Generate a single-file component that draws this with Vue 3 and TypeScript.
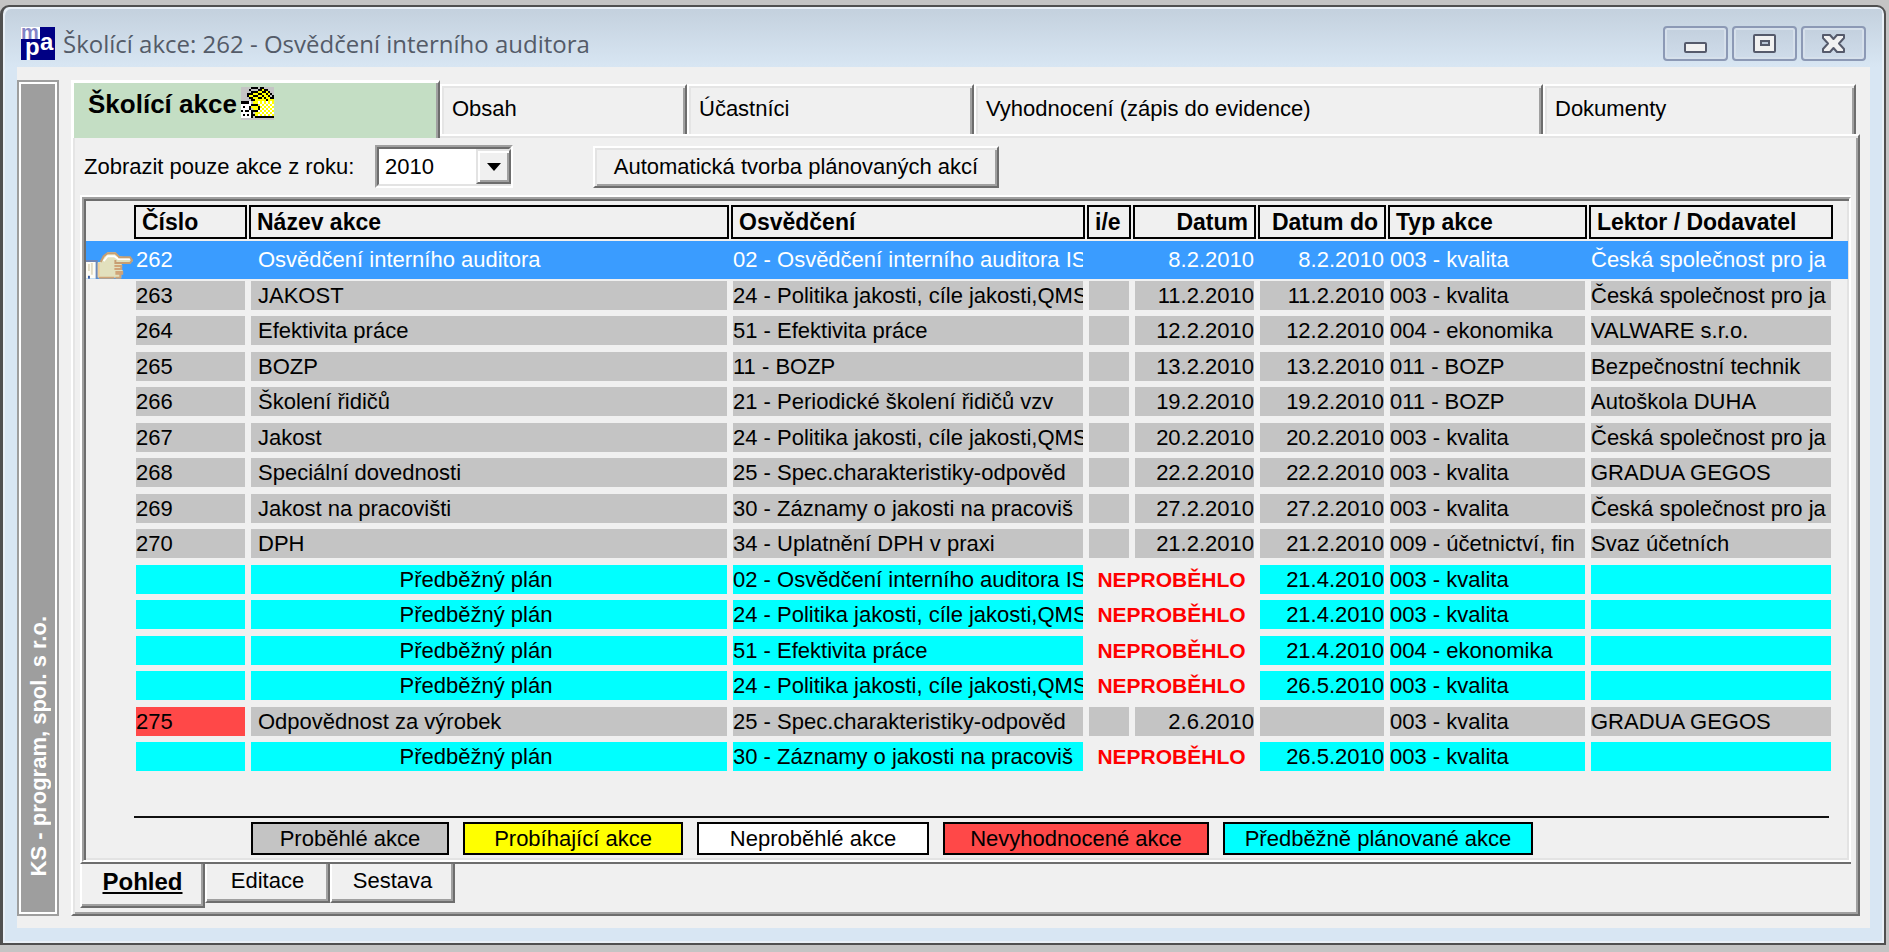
<script setup lang="ts">
import { ref } from 'vue'

type Status = 'done' | 'late' | 'plan'

interface Training {
  id: string
  name: string
  cert: string
  from: string
  to: string
  kind: string
  lector: string
  status: Status
}

const tabs = [
  { label: 'Školící akce', size: 369 },
  { label: 'Obsah', size: 247 },
  { label: 'Účastníci', size: 287 },
  { label: 'Vyhodnocení (zápis do evidence)', size: 569 },
  { label: 'Dokumenty', size: 313 },
]
const activeTab = ref(0)

const views = ['Pohled', 'Editace', 'Sestava']
const activeView = ref(0)

const years = ['2010', '2009', '2008']
const year = ref('2010')

const row = (
  id: string, name: string, cert: string, from: string, to: string,
  kind: string, lector: string, status: Status = 'done',
): Training => ({ id, name, cert, from, to, kind, lector, status })

const plan = (cert: string, to: string, kind: string): Training =>
  row('', 'Předběžný plán', cert, '', to, kind, '', 'plan')

const csj = 'Česká společnost pro ja'
const audit = '02 - Osvědčení interního auditora IS'
const policy = '24 - Politika jakosti, cíle jakosti,QMS'
const spec = '25 - Spec.charakteristiky-odpověd'
const records = '30 - Záznamy o jakosti na pracoviš'

const rows: Training[] = [
  row('262', 'Osvědčení interního auditora', audit, '8.2.2010', '8.2.2010', '003 - kvalita', csj),
  row('263', 'JAKOST', policy, '11.2.2010', '11.2.2010', '003 - kvalita', csj),
  row('264', 'Efektivita práce', '51 - Efektivita práce', '12.2.2010', '12.2.2010', '004 - ekonomika', 'VALWARE s.r.o.'),
  row('265', 'BOZP', '11 - BOZP', '13.2.2010', '13.2.2010', '011 - BOZP', 'Bezpečnostní technik'),
  row('266', 'Školení řidičů', '21 - Periodické školení řidičů vzv', '19.2.2010', '19.2.2010', '011 - BOZP', 'Autoškola DUHA'),
  row('267', 'Jakost', policy, '20.2.2010', '20.2.2010', '003 - kvalita', csj),
  row('268', 'Speciální dovednosti', spec, '22.2.2010', '22.2.2010', '003 - kvalita', 'GRADUA GEGOS'),
  row('269', 'Jakost na pracovišti', records, '27.2.2010', '27.2.2010', '003 - kvalita', csj),
  row('270', 'DPH', '34 - Uplatnění DPH v praxi', '21.2.2010', '21.2.2010', '009 - účetnictví, fin', 'Svaz účetních'),
  plan(audit, '21.4.2010', '003 - kvalita'),
  plan(policy, '21.4.2010', '003 - kvalita'),
  plan('51 - Efektivita práce', '21.4.2010', '004 - ekonomika'),
  plan(policy, '26.5.2010', '003 - kvalita'),
  row('275', 'Odpovědnost za výrobek', spec, '2.6.2010', '', '003 - kvalita', 'GRADUA GEGOS', 'late'),
  plan(records, '26.5.2010', '003 - kvalita'),
]
const selected = ref(0)

const legend = [
  { label: 'Proběhlé akce', color: '#c4c4c4', width: 198 },
  { label: 'Probíhající akce', color: '#ffff00', width: 220 },
  { label: 'Neproběhlé akce', color: '#ffffff', width: 232 },
  { label: 'Nevyhodnocené akce', color: '#ff4848', width: 266 },
  { label: 'Předběžně plánované akce', color: '#00ffff', width: 310 },
]
</script>

<template>
  <div class="desktop">
    <div class="window">
      <header class="titlebar">
        <svg class="logo" viewBox="0 0 34 33" aria-hidden="true">
          <rect width="34" height="33" fill="#000084" />
          <rect width="19" height="12" fill="#fff" />
          <text x="0" y="12" class="lg" font-size="20" fill="#8484c6">m</text>
          <text x="4" y="28" class="lg" font-size="24" fill="#fff">p</text>
          <text x="19" y="23" class="lg" font-size="24" fill="#fff">a</text>
        </svg>
        <h1>Školící akce: 262 - Osvědčení interního auditora</h1>
        <div class="controls">
          <button type="button" aria-label="Minimalizovat">
            <svg width="24" height="20" viewBox="0 0 24 20">
              <rect x="1" y="9" width="21" height="9" rx="1" fill="#f1f1f1" stroke="#555a6b" stroke-width="2" />
            </svg>
          </button>
          <button type="button" aria-label="Maximalizovat">
            <svg width="24" height="20" viewBox="0 0 24 20">
              <rect x="1" y="1" width="21" height="17" rx="1" fill="#f1f1f1" stroke="#555a6b" stroke-width="2" />
              <rect x="8" y="7" width="8" height="4" fill="#b9c6d6" stroke="#555a6b" stroke-width="2" />
            </svg>
          </button>
          <button type="button" aria-label="Zavřít">
            <svg width="24" height="20" viewBox="0 0 24 20">
              <path d="M1 1H8L11.500 5L15 1H22V4L17 9.500L22 15V18H15L11.500 14L8 18H1V15L6 9.500L1 4Z" fill="#f1f1f1" stroke="#555a6b" stroke-width="2" stroke-linejoin="round" />
            </svg>
          </button>
        </div>
      </header>

      <div class="client">
        <aside class="brand"><span>KS - program, spol. s r.o.</span></aside>

        <main class="main">
          <nav class="tabs">
            <button
              v-for="(t, i) in tabs"
              :key="t.label"
              type="button"
              class="tab"
              :class="{ active: i === activeTab }"
              :style="{ flex: `${t.size} 1 ${t.size}px` }"
              @click="activeTab = i"
            >
              <span>{{ t.label }}</span>
              <svg v-if="i === activeTab" class="clap" viewBox="0 0 16 16" shape-rendering="crispEdges" aria-hidden="true">
                <rect width="16" height="16" fill="#c4c4c4" />
                <path d="M0 7H5V15H0Z" fill="#fff" />
                <path d="M4 4H6V2H8V1H11V2H13V3H14V5H15V6H16V14H7V12H6V10H5V8H6V6H4Z" fill="#ffff00" />
                <path
                  d="M8 7h1v1H8zM10 7h1v1h-1zM12 7h1v1h-1zM14 7h1v1h-1zM9 8h1v1H9zM11 8h1v1h-1zM13 8h1v1h-1zM15 8h1v1h-1zM10 9h1v1h-1zM12 9h1v1h-1zM14 9h1v1h-1zM9 10h1v1H9zM11 10h1v1h-1zM13 10h1v1h-1zM15 10h1v1h-1zM8 11h1v1H8zM10 11h1v1h-1zM12 11h1v1h-1zM14 11h1v1h-1zM9 12h1v1H9zM11 12h1v1h-1zM13 12h1v1h-1zM15 12h1v1h-1zM8 13h1v1H8zM10 13h1v1h-1zM12 13h1v1h-1zM14 13h1v1h-1z"
                  fill="#fff"
                />
                <path
                  d="M5 0h3v1H5zM9 0h2v1H9zM4 1h1v1H4zM8 1h2v1H8zM11 1h2v1h-2zM5 2h3v1H5zM10 2h2v1h-2zM13 2h1v1h-1zM3 3h3v1H3zM8 3h2v1H8zM12 3h1v1h-1zM14 3h1v1h-1zM3 4h1v1H3zM6 4h2v1H6zM10 4h1v1h-1zM13 4h1v1h-1zM15 4h1v2h-1zM4 5h2v1H4zM8 5h2v1H8zM11 5h1v1h-1zM14 5h1v1h-1zM5 6h2v1H5zM12 6h1v1h-1zM0 7h4v1H0zM5 8h3v1H5zM4 9h1v2H4zM8 9h1v2H8zM5 11h3v1H5zM1 9h1v1H1zM2 11h2v1H2zM0 11h1v1H0zM1 13h1v1H1zM3 13h1v1H3zM5 12h1v3H5zM6 13h1v1H6zM7 14h9v1H7z"
                  fill="#000"
                />
              </svg>
            </button>
          </nav>

          <section class="panel">
            <div class="toolbar">
              <label for="year">Zobrazit pouze akce z roku:</label>
              <span class="combo">
                <select id="year" v-model="year">
                  <option v-for="y in years" :key="y">{{ y }}</option>
                </select>
                <span class="arrow" aria-hidden="true">
                  <svg width="14" height="8" viewBox="0 0 14 8"><path d="M0 0H14L7 8Z" /></svg>
                </span>
              </span>
              <button type="button" class="push">Automatická tvorba plánovaných akcí</button>
            </div>

            <div class="frame">
              <div class="sheet">
                <table>
                  <colgroup>
                    <col class="c-mark" /><col class="c-id" /><col class="c-name" /><col class="c-cert" />
                    <col class="c-ie" /><col class="c-from" /><col class="c-to" /><col class="c-kind" />
                    <col class="c-lector" /><col class="c-end" />
                  </colgroup>
                  <thead>
                    <tr>
                      <td></td>
                      <th scope="col"><div>Číslo</div></th>
                      <th scope="col"><div>Název akce</div></th>
                      <th scope="col"><div>Osvědčení</div></th>
                      <th scope="col"><div>i/e</div></th>
                      <th scope="col" class="right"><div>Datum</div></th>
                      <th scope="col" class="right"><div>Datum do</div></th>
                      <th scope="col"><div>Typ akce</div></th>
                      <th scope="col"><div>Lektor / Dodavatel</div></th>
                      <td></td>
                    </tr>
                  </thead>
                  <tbody>
                    <tr
                      v-for="(r, i) in rows"
                      :key="i"
                      :class="[r.status, { selected: i === selected }]"
                      @click="selected = i"
                    >
                      <td class="mark">
                        <svg v-if="i === selected" viewBox="0 0 48 28" aria-hidden="true">
                          <path d="M0 10H10V28H0Z" fill="#fffdf5" />
                          <path d="M6 12V24M3 13V20" stroke="#e3dcc4" stroke-width="2" fill="none" />
                          <path d="M0 10H11V28" stroke="#6f86b5" stroke-width="2" fill="none" />
                          <path d="M3 25V28" stroke="#3a5fa5" stroke-width="2" />
                          <path d="M12 11H15L18 5L22 1H30L34 5L46 7L48 10L45 12H36L37 15L36 18L38 20L36 23V27H12Z" fill="#e2e0bd" />
                          <path d="M15 11L18 5L22 2H30L34 6" stroke="#c79e72" stroke-width="2" fill="none" />
                          <path d="M18 10L22 5H29L33 8H45" stroke="#fff" stroke-width="2" fill="none" />
                          <path d="M33 6H45L47 9L45 12H30V9" stroke="#c79e72" stroke-width="2" fill="none" />
                          <path d="M29 15H36V18H29M30 21H37V23H30M30 27H35V24M13 27H29" stroke="#d0a478" stroke-width="2" fill="none" />
                          <path d="M13 12V26" stroke="#f0cf98" stroke-width="2" />
                        </svg>
                      </td>
                      <td class="id">{{ r.id }}</td>
                      <td class="name">{{ r.name }}</td>
                      <td>{{ r.cert }}</td>
                      <td v-if="r.status === 'plan'" class="missed" colspan="2">NEPROBĚHLO</td>
                      <template v-else>
                        <td></td>
                        <td class="right">{{ r.from }}</td>
                      </template>
                      <td class="right">{{ r.to }}</td>
                      <td>{{ r.kind }}</td>
                      <td>{{ r.lector }}</td>
                      <td class="end"></td>
                    </tr>
                  </tbody>
                </table>

                <ul class="legend">
                  <li v-for="l in legend" :key="l.label" :style="{ background: l.color, width: l.width + 'px' }">
                    {{ l.label }}
                  </li>
                </ul>
              </div>
            </div>

            <nav class="views">
              <button
                v-for="(v, i) in views"
                :key="v"
                type="button"
                :class="{ active: i === activeView }"
                @click="activeView = i"
              >{{ v }}</button>
            </nav>
          </section>
        </main>
      </div>
    </div>
  </div>
</template>

<style>
body {
  margin: 0;
  background: #c4c4c4;
}
</style>

<style scoped>
* {
  box-sizing: border-box;
}

.desktop {
  display: flex;
  min-height: 100vh;
  padding: 5px 3px 7px 0;
  background: #c4c4c4;
  color: #000;
  font: 22px/29px "Liberation Sans", Arial, sans-serif;
}

button,
select {
  font: inherit;
  color: inherit;
  border-radius: 0;
}

.window {
  flex: 1;
  min-width: 0;
  display: flex;
  flex-direction: column;
  padding: 0 14px 15px;
  border: 2px solid #505050;
  border-left-width: 3px;
  border-radius: 9px 9px 0 0;
  background: linear-gradient(#c3d0dd, #d8e6f3 60px);
  box-shadow: inset 2px 2px 0 #e9f0f7, inset -2px -2px 0 #e9f0f7;
}

.titlebar {
  display: flex;
  align-items: center;
  height: 60px;
  padding: 13px 4px 0;
}

.logo {
  width: 34px;
  height: 33px;
  margin-right: 8px;
  overflow: hidden;
}

.lg {
  font-family: "Liberation Sans", Arial, sans-serif;
  font-weight: bold;
}

h1 {
  flex: 1;
  margin: 0;
  color: #545b68;
  font: 400 24px/30px "Open Sans", "Noto Sans", sans-serif;
  white-space: nowrap;
}

.controls {
  display: flex;
  gap: 4px;
}

.controls button {
  display: flex;
  align-items: center;
  justify-content: center;
  width: 65px;
  height: 35px;
  padding: 0;
  border: 2px solid #8c99b5;
  border-radius: 4px;
  background: linear-gradient(#c3d0de, #cfdcea);
  box-shadow: inset 0 0 0 2px #d6e0eb;
}

.client {
  flex: 1;
  display: flex;
  gap: 12px;
  padding: 13px 10px 12px 0;
  background: #f0f0f0;
}

.brand {
  display: flex;
  align-items: flex-end;
  justify-content: center;
  width: 42px;
  padding-bottom: 38px;
  border: 2px solid #9e9e9e;
  background: #9e9e9e;
  box-shadow: inset 0 0 0 2px #fff;
  color: #fff;
  font-weight: bold;
}

.brand span {
  writing-mode: vertical-rl;
  transform: rotate(180deg);
  white-space: nowrap;
}

.main {
  flex: 1;
  min-width: 0;
  display: flex;
  flex-direction: column;
}

.tabs {
  display: flex;
  height: 54px;
  padding-right: 4px;
}

.tab {
  display: flex;
  align-items: center;
  min-width: 0;
  margin-top: 4px;
  padding: 0 10px 4px;
  border: solid;
  border-width: 2px 2px 0;
  border-color: #fff #6d6d6d #fff #fff;
  background: #f0f0f0;
  box-shadow: inset 2px 2px 0 #e5e5e5, inset -2px 0 0 #a0a0a0;
  white-space: nowrap;
}

.tab.active {
  z-index: 1;
  align-items: flex-start;
  margin-top: 0;
  margin-bottom: -4px;
  padding: 4px 14px;
  border-width: 3px 2px 0 3px;
  background: #c4dec4;
  box-shadow: inset -2px 0 0 #a0a0a0;
  font-size: 26px;
  font-weight: bold;
  line-height: 34px;
}

.clap {
  width: 33px;
  height: 33px;
  margin-left: 4px;
}

.panel {
  flex: 1;
  display: flex;
  flex-direction: column;
  padding: 9px 7px 6px;
  border: 2px solid;
  border-color: #fff #6d6d6d #6d6d6d #fff;
  box-shadow: inset 2px 2px 0 #e5e5e5, inset -2px -2px 0 #a0a0a0;
}

.toolbar {
  display: flex;
  align-items: center;
  height: 43px;
  margin-bottom: 7px;
  padding-left: 4px;
}

.toolbar label {
  width: 291px;
}

.combo {
  position: relative;
  width: 138px;
  height: 43px;
  border: 2px solid;
  border-color: #a0a0a0 #fff #fff #a0a0a0;
}

.combo select {
  width: 100%;
  height: 100%;
  padding: 0 6px;
  border: 2px solid;
  border-color: #6d6d6d #e3e3e3 #e3e3e3 #6d6d6d;
  background: #fff;
  appearance: none;
}

.arrow {
  position: absolute;
  top: 2px;
  right: 0;
  bottom: 2px;
  display: flex;
  align-items: center;
  justify-content: center;
  width: 35px;
  border: 2px solid;
  border-color: #e3e3e3 #6d6d6d #6d6d6d #e3e3e3;
  background: #f0f0f0;
  box-shadow: inset 2px 2px 0 #fff, inset -2px -2px 0 #a0a0a0;
  pointer-events: none;
}

.push {
  width: 406px;
  height: 42px;
  margin-left: 80px;
  padding: 0;
  border: 2px solid;
  border-color: #fff #6d6d6d #6d6d6d #fff;
  background: #f0f0f0;
  box-shadow: inset 2px 2px 0 #e3e3e3, inset -2px -2px 0 #a0a0a0;
  white-space: nowrap;
}

.frame {
  flex: 1;
  display: flex;
  border: solid;
  border-width: 2px 0 2px 2px;
  border-color: #fff #fff #6d6d6d #fff;
}

.sheet {
  flex: 1;
  min-width: 0;
  display: flex;
  flex-direction: column;
  padding: 2px;
  border: 2px solid;
  border-color: #a0a0a0 #fff #fff #a0a0a0;
  box-shadow: inset 2px 2px 0 #6d6d6d, inset -2px -2px 0 #e3e3e3;
}

table {
  width: 100%;
  table-layout: fixed;
  border-collapse: separate;
  border-spacing: 0;
}

.c-mark { width: 47px; }
.c-id { width: 115px; }
.c-name { width: 482px; }
.c-cert { width: 356px; }
.c-ie { width: 46px; }
.c-from { width: 125px; }
.c-to { width: 130px; }
.c-kind { width: 201px; }
.c-lector { width: 246px; }
.c-end { width: 14px; }

th {
  padding: 4px 1px 2px;
  font-size: 23px;
  line-height: 30px;
  text-align: left;
}

th div {
  padding: 0 6px;
  border: 2px solid #000;
  overflow: hidden;
  white-space: nowrap;
}

th.right {
  text-align: right;
}

tbody td {
  height: 29px;
  padding: 0;
  border: solid transparent;
  border-width: 2px 3px 4px;
  background: #c4c4c4 padding-box;
  box-sizing: content-box;
  overflow: hidden;
  white-space: nowrap;
}

tbody tr:nth-child(odd) td {
  border-bottom-width: 5px;
}

tbody td.right {
  text-align: right;
}

tbody td.name {
  padding-left: 7px;
}

.late td.id {
  background-color: #ff4848;
}

.plan td {
  background-color: #00ffff;
}

.plan td.name {
  padding: 0 26px 0 0;
  text-align: center;
}

.plan td.missed {
  background: none;
  color: #ff0000;
  font-size: 21px;
  font-weight: bold;
  text-align: center;
}

tbody td.mark,
tbody td.end {
  border-width: 0;
  background: none;
}

tbody tr:nth-child(odd) td.mark,
tbody tr:nth-child(odd) td.end {
  border-width: 0;
}

.mark svg {
  display: block;
  width: 100%;
  height: 28px;
  margin-top: 10px;
}

tbody tr.selected {
  background: #3a9cff;
  color: #fff;
}

tbody tr.selected td {
  border-top-width: 4px;
  background: none;
}

tbody tr.selected td.mark {
  border-width: 0;
}

.legend {
  display: flex;
  gap: 14px;
  margin: auto 18px 3px 48px;
  padding: 4px 0 0 117px;
  border-top: 2px solid #111;
  list-style: none;
}

.legend li {
  border: 2px solid #000;
  text-align: center;
  white-space: nowrap;
}

.views {
  display: flex;
  align-items: flex-start;
  height: 44px;
}

.views button {
  width: 125px;
  height: 39px;
  padding: 0 0 4px;
  border: 2px solid;
  border-color: transparent #6d6d6d #6d6d6d #fff;
  border-top: 0;
  background: #f0f0f0;
  box-shadow: inset -2px -2px 0 #a0a0a0;
}

.views button.active {
  height: 44px;
  padding-bottom: 7px;
  font-size: 24px;
  font-weight: bold;
  text-decoration: underline;
}
</style>
